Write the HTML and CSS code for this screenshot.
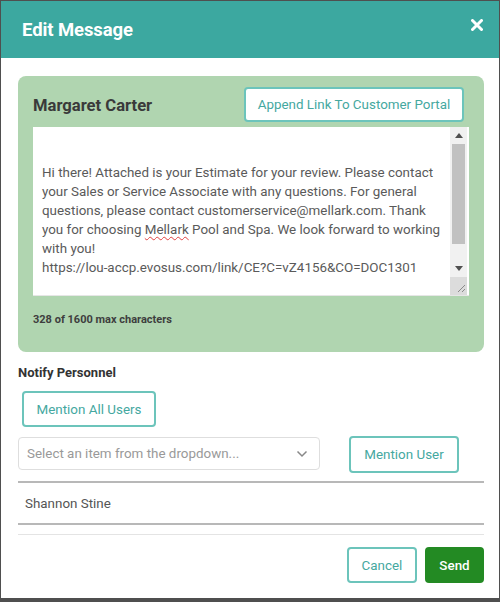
FILE: index.html
```html
<!DOCTYPE html>
<html>
<head>
<meta charset="utf-8">
<link rel="stylesheet" href="styles.css">
</head>
<body>
<div class="modal">
  <div class="modal-header">
    <h1 class="modal-title">Edit Message</h1>
    <svg class="close-icon" width="12" height="12" viewBox="0 0 12 12"><path d="M1.5 1.5 L10.5 10.5 M10.5 1.5 L1.5 10.5" stroke="#fff" stroke-width="3" stroke-linecap="round"/></svg>
  </div>
  <div class="modal-body">
    <div class="panel">
      <div class="panel-head">
        <span class="customer">Margaret Carter</span>
        <button class="btn btn-outline btn-append">Append Link To Customer Portal</button>
      </div>
      <div class="textarea">
        <div class="textarea-text">Hi there! Attached is your Estimate for your review. Please contact<br>your Sales or Service Associate with any questions. For general<br>questions, please contact customerservice@mellark.com. Thank<br>you for choosing <span class="misspelled">Mellark</span> Pool and Spa. We look forward to working<br>with you!<br>https://lou-accp.evosus.com/link/CE?C=vZ4156&amp;CO=DOC1301</div>
        <div class="scrollbar">
          <div class="sb-arrow"><svg width="8" height="5" viewBox="0 0 8 5"><path d="M0 5 L4 0 L8 5Z" fill="#505050"/></svg></div>
          <div class="sb-track"><div class="sb-thumb"></div></div>
          <div class="sb-arrow"><svg width="8" height="5" viewBox="0 0 8 5"><path d="M0 0 L4 5 L8 0Z" fill="#505050"/></svg></div>
          <div class="sb-corner"><svg width="10" height="10" viewBox="0 0 10 10"><path d="M9 2 L2 9 M9 6 L6 9" stroke="#8a8a8a" stroke-width="1"/></svg></div>
        </div>
      </div>
      <div class="counter">328 of 1600 max characters</div>
    </div>

    <div class="section-label">Notify Personnel</div>
    <button class="btn btn-outline btn-all">Mention All Users</button>
    <div class="select-row">
      <div class="select">
        <span class="placeholder">Select an item from the dropdown...</span>
        <svg width="12" height="8" viewBox="0 0 12 8"><path d="M1.5 1.5 L6 6 L10.5 1.5" stroke="#888" stroke-width="1.5" fill="none"/></svg>
      </div>
      <button class="btn btn-outline btn-mention">Mention User</button>
    </div>
    <div class="user-list">
      <div class="user-item">Shannon Stine</div>
    </div>
    <div class="footer">
      <button class="btn btn-outline btn-cancel">Cancel</button>
      <button class="btn btn-send">Send</button>
    </div>
  </div>
</div>
</body>
</html>
```
FILE: styles.css
```css
* { box-sizing: border-box; }
html, body { margin: 0; padding: 0; }
body {
  background: #4f4f4f;
  font-family: Roboto, "Liberation Sans", Arial, sans-serif;
  width: 500px;
  height: 602px;
  overflow: hidden;
}
.modal {
  margin: 1px 1px 0 1px;
  height: 597px;
  background: #fff;
  display: flex;
  flex-direction: column;
}
.modal-header {
  height: 57px;
  background: #3ca8a0;
  display: flex;
  align-items: center;
  justify-content: space-between;
  padding: 0 16px 0 21px;
}
.modal-title {
  margin: 0;
  color: #fff;
  font-size: 18.5px;
  font-weight: 700;
  letter-spacing: -0.1px;
}
.close-icon { margin-top: -9px; }
.modal-body {
  padding: 18px 15px 0 17px;
}
.panel {
  background: #b0d5b0;
  border-radius: 8px;
  padding: 11px 15px 26px 15px;
}
.panel-head {
  display: flex;
  align-items: center;
  justify-content: space-between;
  height: 35px;
}
.customer {
  font-size: 16.6px;
  font-weight: 700;
  color: #3a3a3a;
  margin-top: 1px;
}
.btn {
  font-family: Roboto, "Liberation Sans", Arial, sans-serif;
  font-size: 13.4px;
  border-radius: 4px;
  cursor: pointer;
  padding: 0;
}
.btn-outline {
  background: #fff;
  border: 2px solid #6cc4bb;
  color: #45a89f;
}
.btn-append {
  width: 220px;
  height: 35px;
  margin-right: 5px;
}
.textarea {
  margin-top: 5px;
  height: 169px;
  background: #fff;
  display: flex;
  border-bottom: 1px solid #e6e6e6;
}
.textarea-text {
  flex: 1;
  padding: 36px 0 0 9px;
  font-size: 13.4px;
  line-height: 19px;
  color: #5a5a5a;
  white-space: nowrap;
}
.misspelled {
  text-decoration: underline wavy #e04040;
  text-decoration-thickness: 1px;
  text-underline-offset: 2px;
}
.scrollbar {
  width: 17px;
  margin-right: 2px;
  background: #f1f1f1;
  display: flex;
  flex-direction: column;
}
.sb-arrow {
  height: 17px;
  display: flex;
  align-items: center;
  justify-content: center;
}
.sb-track {
  flex: 1;
  padding: 0 2px;
}
.sb-thumb {
  height: 100px;
  background: #c1c1c1;
}
.sb-corner {
  height: 18px;
  background: #dcdcdc;
  display: flex;
  align-items: flex-end;
  justify-content: flex-end;
  padding: 0 1px 2px 0;
}
.counter {
  margin-top: 17px;
  font-size: 11px;
  line-height: 13px;
  font-weight: 700;
  color: #3e3e3e;
}
.section-label {
  margin-top: 13px;
  font-size: 13px;
  line-height: 16px;
  font-weight: 700;
  color: #333;
}
.btn-all {
  display: block;
  margin: 10px 0 0 4px;
  width: 134px;
  height: 36px;
}
.select-row {
  display: flex;
  align-items: flex-start;
  margin-top: 9px;
}
.select {
  margin-top: 1px;
  width: 302px;
  height: 33px;
  border: 1px solid #dedede;
  border-radius: 4px;
  display: flex;
  align-items: center;
  justify-content: space-between;
  padding: 0 11px 0 8px;
}
.placeholder {
  font-size: 13.4px;
  color: #999;
}
.btn-mention {
  margin-left: 29px;
  width: 110px;
  height: 37px;
}
.user-list {
  margin-top: 8px;
  border-top: 2px solid #b8b8b8;
  border-bottom: 2px solid #b8b8b8;
}
.user-item {
  height: 40px;
  display: flex;
  align-items: center;
  padding-left: 7px;
  font-size: 13.4px;
  color: #555;
}
.footer {
  margin-top: 9px;
  border-top: 1px solid #e4e4e4;
  padding-top: 12px;
  display: flex;
  justify-content: flex-end;
  gap: 8px;
}
.btn-cancel {
  width: 70px;
  height: 36px;
}
.btn-send {
  width: 59px;
  height: 36px;
  background: #238a23;
  border: none;
  color: #fff;
  font-weight: 500;
}
```
